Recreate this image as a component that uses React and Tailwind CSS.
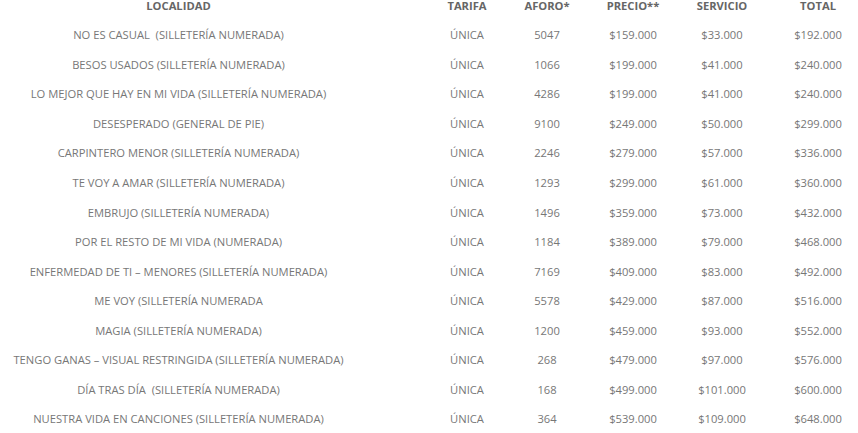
import React from 'react';

const rows = [
    { name: 'NO ES CASUAL \u00a0(SILLETERÍA NUMERADA)', aforo: '5047', precio: '$159.000', servicio: '$33.000', total: '$192.000' },
    { name: 'BESOS USADOS (SILLETERÍA NUMERADA)', aforo: '1066', precio: '$199.000', servicio: '$41.000', total: '$240.000' },
    { name: 'LO MEJOR QUE HAY EN MI VIDA (SILLETERÍA NUMERADA)', aforo: '4286', precio: '$199.000', servicio: '$41.000', total: '$240.000' },
    { name: 'DESESPERADO (GENERAL DE PIE)', aforo: '9100', precio: '$249.000', servicio: '$50.000', total: '$299.000' },
    { name: 'CARPINTERO MENOR (SILLETERÍA NUMERADA)', aforo: '2246', precio: '$279.000', servicio: '$57.000', total: '$336.000' },
    { name: 'TE VOY A AMAR (SILLETERÍA NUMERADA)', aforo: '1293', precio: '$299.000', servicio: '$61.000', total: '$360.000' },
    { name: 'EMBRUJO (SILLETERÍA NUMERADA)', aforo: '1496', precio: '$359.000', servicio: '$73.000', total: '$432.000' },
    { name: 'POR EL RESTO DE MI VIDA (NUMERADA)', aforo: '1184', precio: '$389.000', servicio: '$79.000', total: '$468.000' },
    { name: 'ENFERMEDAD DE TI – MENORES (SILLETERÍA NUMERADA)', aforo: '7169', precio: '$409.000', servicio: '$83.000', total: '$492.000' },
    { name: 'ME VOY (SILLETERÍA NUMERADA', aforo: '5578', precio: '$429.000', servicio: '$87.000', total: '$516.000' },
    { name: 'MAGIA (SILLETERÍA NUMERADA)', aforo: '1200', precio: '$459.000', servicio: '$93.000', total: '$552.000' },
    { name: 'TENGO GANAS – VISUAL RESTRINGIDA (SILLETERÍA NUMERADA)', aforo: '268', precio: '$479.000', servicio: '$97.000', total: '$576.000' },
    { name: 'DÍA TRAS DÍA \u00a0(SILLETERÍA NUMERADA)', aforo: '168', precio: '$499.000', servicio: '$101.000', total: '$600.000' },
    { name: 'NUESTRA VIDA EN CANCIONES (SILLETERÍA NUMERADA)', aforo: '364', precio: '$539.000', servicio: '$109.000', total: '$648.000' },
];

// column layout: localidad | tarifa | aforo | precio | servicio | total
const grid = 'grid grid-cols-[417px_100px_60px_112px_66px_1fr] text-center';

export default function App() {
    return (
        <div className="w-[858px] h-[433px] overflow-hidden bg-white font-['Open_Sans',sans-serif] text-[11.2px]">
            {/* Header */}
            <div className={`${grid} items-start h-[20.5px] leading-[11px] font-bold text-[#666]`}>
                <div className="pr-[60px]">LOCALIDAD</div>
                <div>TARIFA</div>
                <div>AFORO*</div>
                <div>PRECIO**</div>
                <div>SERVICIO</div>
                <div className="pl-[23px]">TOTAL</div>
            </div>

            {/* Rows */}
            {rows.map(row => (
                <div key={row.name} className={`${grid} items-center h-[29.55px] leading-[14px] text-[#777]`}>
                    <div className="pr-[60px] whitespace-nowrap">{row.name}</div>
                    <div>ÚNICA</div>
                    <div>{row.aforo}</div>
                    <div>{row.precio}</div>
                    <div>{row.servicio}</div>
                    <div className="pl-[23px]">{row.total}</div>
                </div>
            ))}
        </div>
    );
}
